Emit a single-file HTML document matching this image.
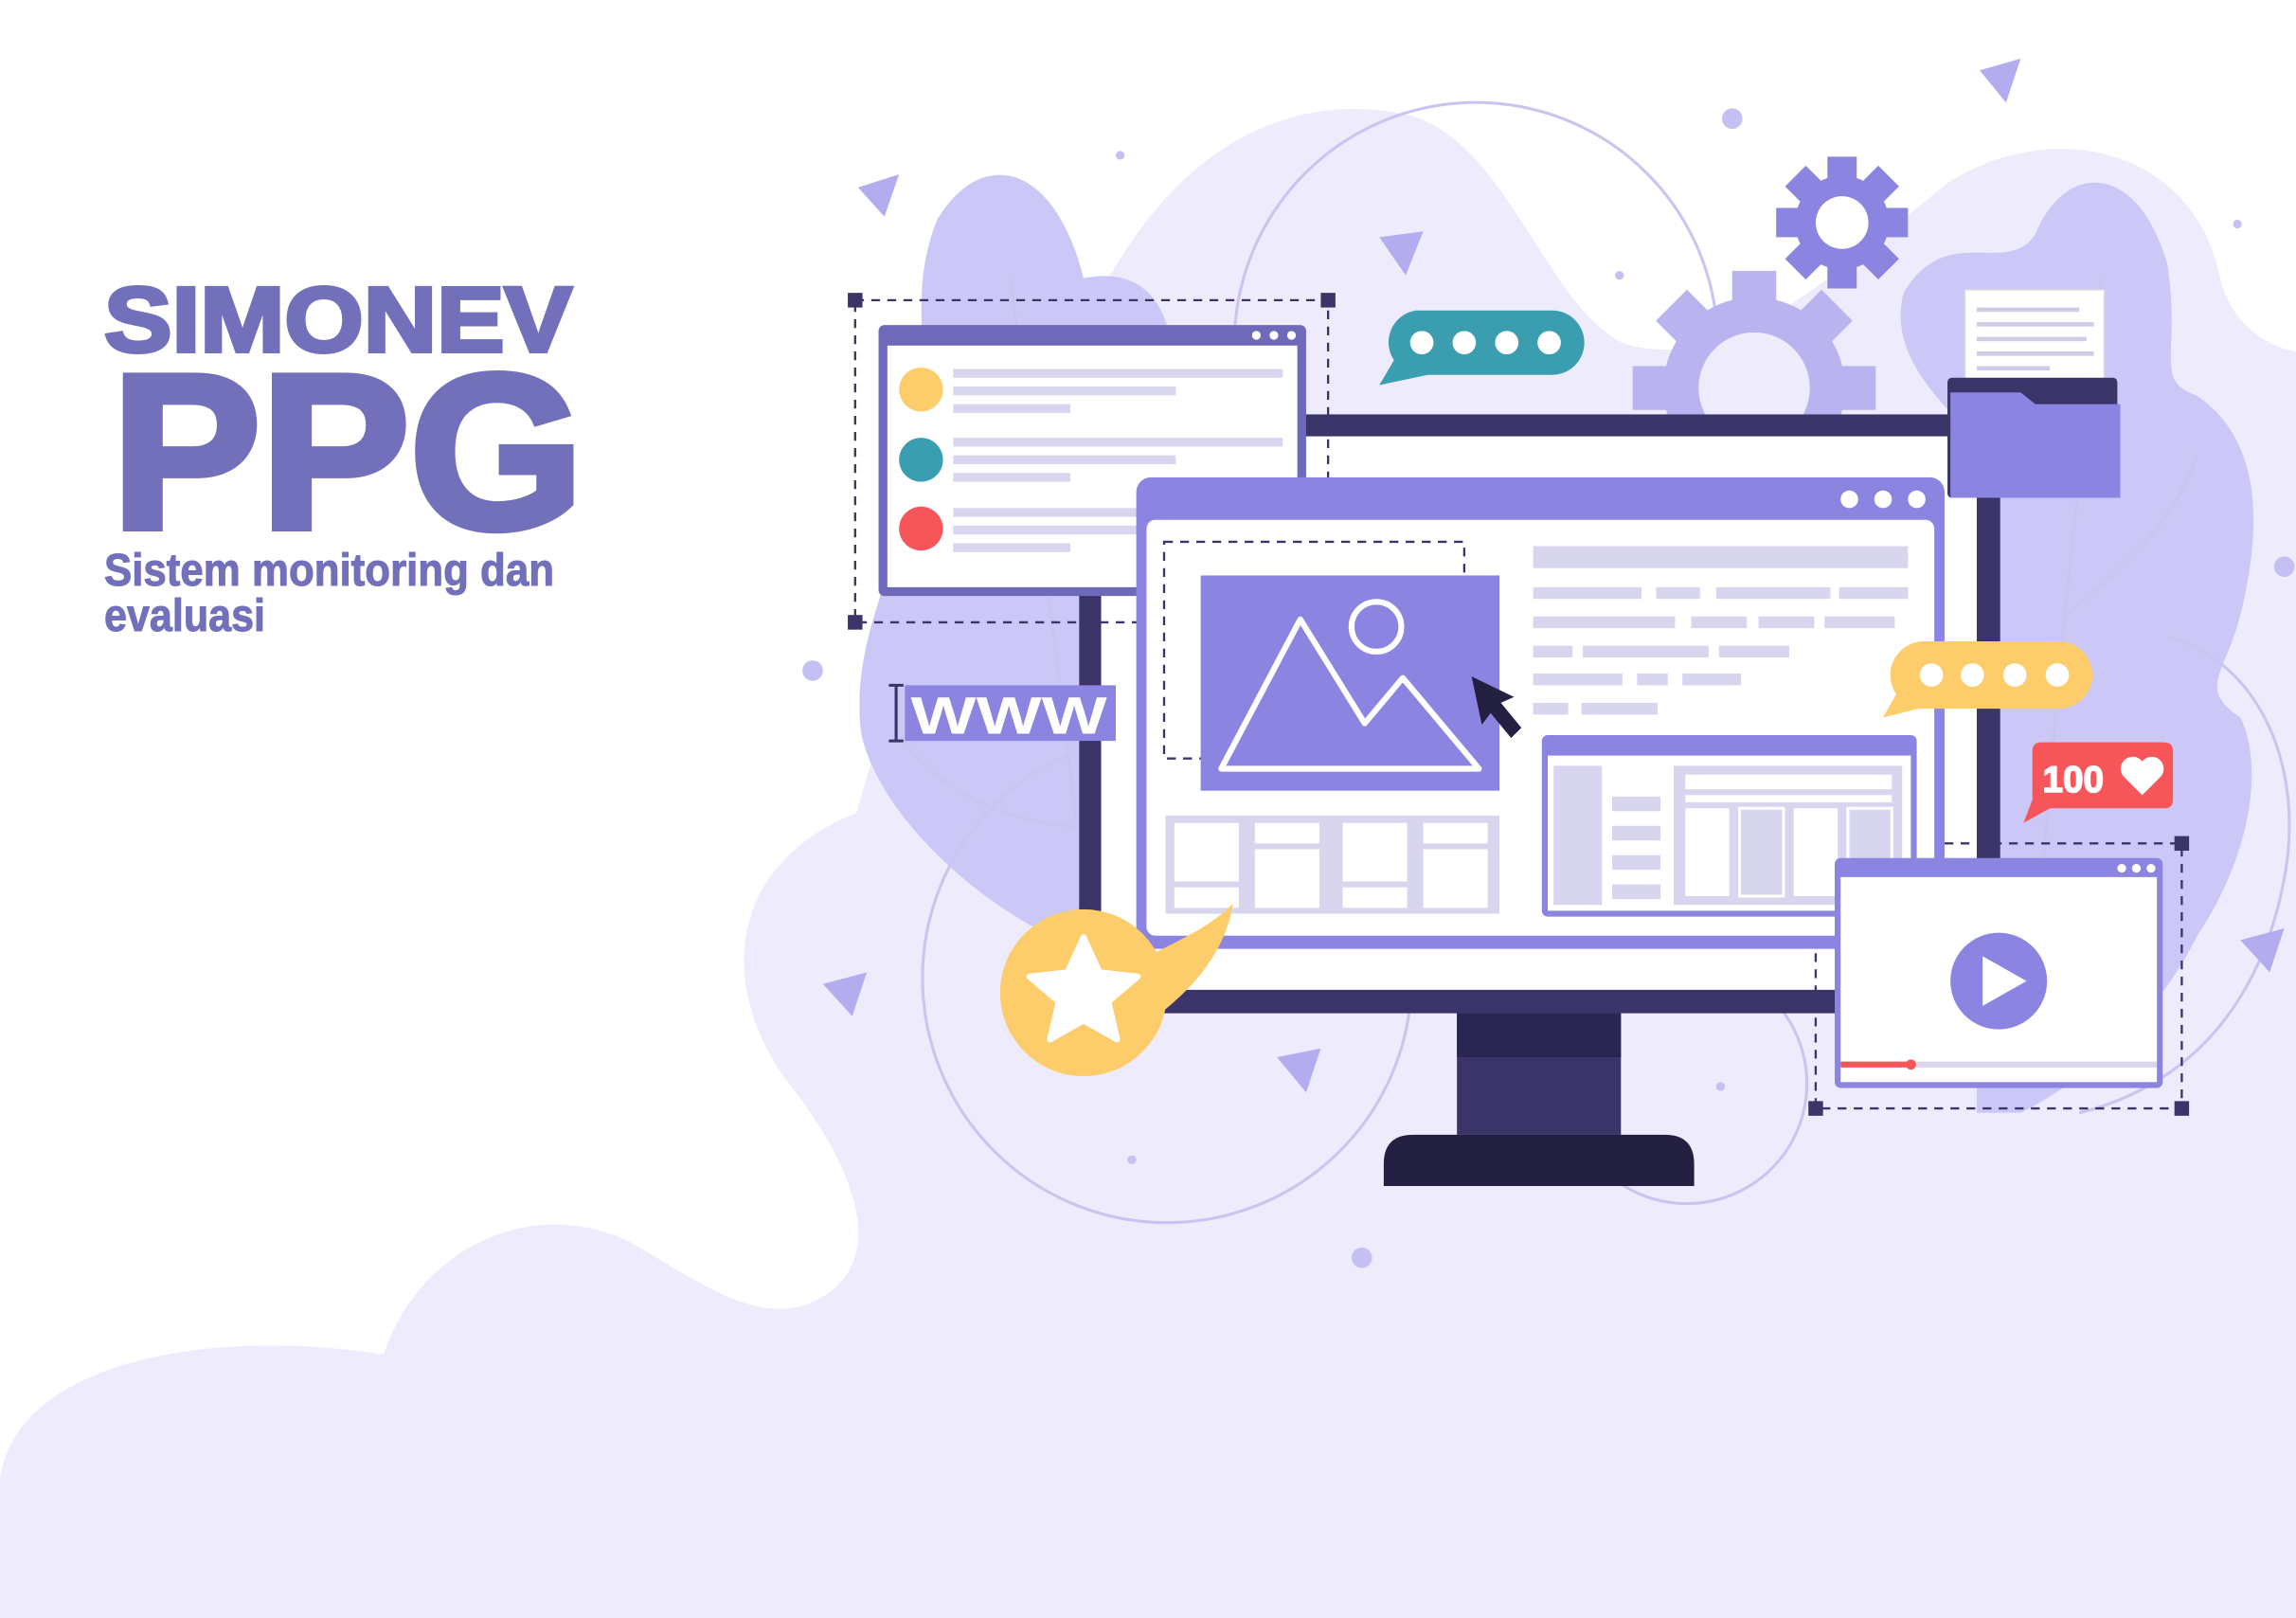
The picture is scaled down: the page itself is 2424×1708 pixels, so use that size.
<!DOCTYPE html>
<html><head><meta charset="utf-8"><style>
html,body{margin:0;padding:0;background:#fff;}
svg{display:block;}
</style></head><body>
<svg width="2424" height="1708" viewBox="0 0 2424 1708" xmlns="http://www.w3.org/2000/svg">
<rect width="2424" height="1708" fill="#fff"/>
<g transform="scale(1.5459 1.5457)">
<path fill="#eeecfc" d="M0,1105 L0,1010 C10,935 130,905 262,925 C285,855 360,815 430,848 C485,880 530,915 572,878 C605,845 575,785 535,735 C490,670 498,590 585,555 C615,450 650,320 760,185 C810,100 880,62 960,78 C1030,95 1055,210 1110,235 C1180,255 1250,190 1330,125 C1400,80 1495,100 1515,185 C1525,235 1568,240 1568,240 L1568,1105 Z"/>
<path fill="#cbc7f7" d="M640,150 C670,100 720,110 740,190 C790,180 810,220 800,300 C790,330 760,340 745,420 L745,650 C680,630 600,560 588,500 C580,430 620,380 630,300 C635,240 620,200 640,150 Z"/>
<path fill="#cbc7f7" d="M1300,200 C1330,150 1370,190 1390,160 C1410,110 1460,110 1480,180 C1490,240 1470,260 1500,270 C1545,300 1545,360 1530,420 C1520,460 1500,470 1530,490 C1545,520 1540,580 1500,640 C1470,700 1420,740 1380,760 L1350,760 L1350,300 C1320,270 1290,240 1300,200 Z"/>
<g fill="none" stroke="#cac5f0" stroke-width="2">
<circle cx="1008" cy="235" r="165"/>
<circle cx="797" cy="668" r="167"/>
<circle cx="1152" cy="740" r="82"/>
<path d="M1480,435 C1540,450 1575,520 1560,600 C1545,680 1500,740 1420,760"/>
<path d="M620,510 C650,545 690,562 740,565"/>
<path d="M690,190 L735,560"/>
<path d="M1435,190 L1410,420 L1395,590"/>
<path d="M1410,420 C1450,390 1490,350 1500,310"/>
</g>
<g fill="#b9b3f0">
<circle cx="1198" cy="265" r="62"/>
<rect x="1183" y="185" width="30" height="160"/>
<rect x="1115" y="250" width="166" height="30"/>
<rect x="1183" y="185" width="30" height="160" transform="rotate(45 1198 265)"/>
<rect x="1183" y="185" width="30" height="160" transform="rotate(-45 1198 265)"/>
</g>
<circle cx="1198" cy="265" r="38" fill="#eeecfc"/>
<g fill="#8b84e0">
<circle cx="1258" cy="152" r="32"/>
<rect x="1248" y="107" width="20" height="90"/>
<rect x="1213" y="142" width="90" height="20"/>
<rect x="1248" y="107" width="20" height="90" transform="rotate(45 1258 152)"/>
<rect x="1248" y="107" width="20" height="90" transform="rotate(-45 1258 152)"/>
</g>
<circle cx="1258" cy="152" r="18" fill="#fff"/>
<rect x="737" y="283" width="629" height="409" fill="#3a3468"/>
<rect x="752" y="298" width="598" height="378" fill="#fff"/>
<rect x="995" y="692" width="112" height="83" fill="#3a3468"/>
<rect x="995" y="692" width="112" height="30" fill="#2a2552"/>
<path d="M945,795 Q945,775 965,775 L1137,775 Q1157,775 1157,795 L1157,810 L945,810 Z" fill="#232042"/>
<rect x="1342" y="198" width="95" height="80" fill="#fff" stroke="#ddd" stroke-width="1"/>
<g fill="#cfcce8"><rect x="1350" y="210" width="70" height="3"/><rect x="1350" y="220" width="80" height="3"/><rect x="1350" y="230" width="75" height="3"/><rect x="1350" y="240" width="80" height="3"/><rect x="1350" y="250" width="50" height="3"/></g>
<rect x="1330" y="258" width="116" height="82" rx="3" fill="#3a3468"/>
<path d="M1332,268 L1380,268 L1390,276 L1448,276 L1448,340 L1332,340 Z" fill="#8b84e0"/>
<rect x="600" y="222" width="292" height="185" rx="4" fill="#6e69b8"/>
<rect x="606" y="236" width="280" height="165" fill="#fff"/>
<g fill="#fff"><circle cx="858" cy="229" r="3"/><circle cx="870" cy="229" r="3"/><circle cx="882" cy="229" r="3"/></g>
<circle cx="629" cy="266" r="15" fill="#fccd6a"/>
<circle cx="629" cy="314" r="15" fill="#3a9eb0"/>
<circle cx="629" cy="361" r="15" fill="#f6565a"/>
<g fill="#d8d5ef">
<rect x="651" y="252" width="225" height="6"/><rect x="651" y="264" width="152" height="6"/><rect x="651" y="276" width="80" height="6"/>
<rect x="651" y="299" width="225" height="6"/><rect x="651" y="311" width="152" height="6"/><rect x="651" y="323" width="80" height="6"/>
<rect x="651" y="347" width="225" height="6"/><rect x="651" y="359" width="152" height="6"/><rect x="651" y="371" width="80" height="6"/>
</g>
<g fill="none" stroke="#3a3468" stroke-width="1.5" stroke-dasharray="6 5">
<rect x="584" y="205" width="323" height="220"/>
<rect x="1240" y="576" width="250" height="181"/>
</g>
<g fill="#3a3468"><rect x="579" y="200" width="10" height="10"/><rect x="902" y="200" width="10" height="10"/><rect x="579" y="420" width="10" height="10"/>
<rect x="1235" y="752" width="10" height="10"/><rect x="1485" y="752" width="10" height="10"/><rect x="1485" y="571" width="10" height="10"/></g>
<rect x="776" y="326" width="552" height="322" rx="10" fill="#8b84e0"/>
<rect x="783" y="355" width="538" height="284" rx="6" fill="#fff"/>
<g fill="#fff"><circle cx="1263" cy="341" r="6"/><circle cx="1286" cy="341" r="6"/><circle cx="1309" cy="341" r="6"/></g>
<rect x="795" y="370" width="205" height="148" fill="none" stroke="#3a3468" stroke-width="1.5" stroke-dasharray="6 5"/>
<rect x="820" y="393" width="204" height="147" fill="#8b84e0"/>
<path d="M834,525 L888,423 L932,494 L958,463 L1010,525 Z" fill="none" stroke="#fff" stroke-width="4" stroke-linejoin="round"/>
<circle cx="940" cy="428" r="17" fill="none" stroke="#fff" stroke-width="4"/>
<path d="M1005,462 L1012,495 L1018,487 L1032,504 L1039,497 L1025,480 L1034,476 Z" fill="#232042"/>
<g fill="#d8d5ef">
<rect x="1047" y="373" width="256" height="15"/>
<rect x="1047" y="401" width="74" height="8"/><rect x="1131" y="401" width="30" height="8"/><rect x="1172" y="401" width="78" height="8"/><rect x="1256" y="401" width="47" height="8"/>
<rect x="1047" y="421" width="97" height="8"/><rect x="1155" y="421" width="38" height="8"/><rect x="1201" y="421" width="38" height="8"/><rect x="1246" y="421" width="48" height="8"/>
<rect x="1047" y="441" width="27" height="8"/><rect x="1081" y="441" width="86" height="8"/><rect x="1174" y="441" width="48" height="8"/>
<rect x="1047" y="460" width="61" height="8"/><rect x="1118" y="460" width="21" height="8"/><rect x="1149" y="460" width="40" height="8"/>
<rect x="1047" y="480" width="24" height="8"/><rect x="1080" y="480" width="52" height="8"/>
<rect x="796" y="557" width="228" height="67"/>
</g>
<g fill="#fff">
<rect x="802" y="562" width="44" height="40"/><rect x="802" y="606" width="44" height="14"/>
<rect x="857" y="562" width="44" height="14"/><rect x="857" y="580" width="44" height="40"/>
<rect x="917" y="562" width="44" height="40"/><rect x="917" y="606" width="44" height="14"/>
<rect x="972" y="562" width="44" height="14"/><rect x="972" y="580" width="44" height="40"/>
</g>
<rect x="1053" y="502" width="256" height="124" rx="4" fill="#8b84e0"/>
<rect x="1057" y="516" width="248" height="106" fill="#fff"/>
<g fill="#d8d5ef"><rect x="1061" y="523" width="33" height="95"/>
<rect x="1101" y="544" width="33" height="10"/><rect x="1101" y="564" width="33" height="10"/><rect x="1101" y="584" width="33" height="10"/><rect x="1101" y="604" width="33" height="10"/>
<rect x="1143" y="523" width="156" height="95"/></g>
<g fill="#fff"><rect x="1151" y="529" width="141" height="10"/><rect x="1151" y="543" width="141" height="5"/>
<rect x="1151" y="552" width="30" height="60"/><rect x="1188" y="552" width="30" height="60" fill="none" stroke="#fff" stroke-width="2"/><rect x="1225" y="552" width="30" height="60"/><rect x="1262" y="552" width="30" height="60" fill="none" stroke="#fff" stroke-width="2"/></g>
<rect x="1253" y="586" width="224" height="157" rx="4" fill="#8b84e0"/>
<rect x="1257" y="599" width="216" height="140" fill="#fff"/>
<g fill="#fff"><circle cx="1449" cy="593" r="3"/><circle cx="1459" cy="593" r="3"/><circle cx="1469" cy="593" r="3"/></g>
<circle cx="1365" cy="670" r="33" fill="#8b84e0"/>
<path d="M1354,653 L1384,670 L1354,687 Z" fill="#fff"/>
<rect x="1257" y="725" width="216" height="4" fill="#d8d5ef"/>
<rect x="1257" y="725" width="48" height="4" fill="#f6565a"/><circle cx="1305" cy="727" r="3.5" fill="#f6565a"/>
<path d="M967,212 L1060,212 A22,22 0 0 1 1060,256 L975,256 L942,263 L952,246 A22,22 0 0 1 967,212 Z" fill="#3a9eb0"/>
<g fill="#fff"><circle cx="971" cy="234" r="8"/><circle cx="1000" cy="234" r="8"/><circle cx="1029" cy="234" r="8"/><circle cx="1058" cy="234" r="8"/></g>
<path d="M1315,438 L1406,438 A23,23 0 0 1 1406,484 L1310,484 L1286,490 L1295,474 A23,23 0 0 1 1315,438 Z" fill="#fccd6a"/>
<g fill="#fff"><circle cx="1319" cy="461" r="8"/><circle cx="1347" cy="461" r="8"/><circle cx="1376" cy="461" r="8"/><circle cx="1405" cy="461" r="8"/></g>
<path d="M1394,507 L1478,507 Q1484,507 1484,513 L1484,546 Q1484,552 1478,552 L1400,552 L1382,562 L1388,546 L1388,513 Q1388,507 1394,507 Z" fill="#f6565a"/>
<text x="1395" y="541" font-family="Liberation Sans, sans-serif" font-weight="bold" font-size="25" fill="#fff" stroke="#fff" stroke-width="1">100</text>
<path d="M1463,543 L1450,530 A7,7 0 0 1 1463,520 A7,7 0 0 1 1476,530 Z" fill="#fff"/>
<path d="M790,650 C810,640 830,630 842,617 C838,645 820,670 795,690 Z" fill="#fccd6a"/>
<circle cx="740" cy="678" r="57" fill="#fccd6a"/>
<path d="M740,640 L751,664 L777,667 L757,684 L763,710 L740,697 L717,710 L723,684 L703,667 L729,664 Z" fill="#fff" stroke="#fff" stroke-width="4" stroke-linejoin="round"/>
<rect x="618" y="468" width="144" height="38" fill="#8b84e0"/>
<text x="622" y="501" font-family="Liberation Sans, sans-serif" font-weight="bold" font-size="36" fill="#fff" textLength="134" lengthAdjust="spacingAndGlyphs">WWW</text>
<path d="M607,468 L617,468 M612,468 L612,506 M607,506 L617,506" stroke="#3a3468" stroke-width="2"/>
<g fill="#b3adf0">
<path d="M586,128 L614,119 L604,148 Z"/><path d="M942,162 L972,158 L960,188 Z"/><path d="M1352,48 L1380,40 L1370,70 Z"/>
<path d="M562,672 L592,664 L582,694 Z"/><path d="M872,722 L902,716 L892,746 Z"/><path d="M1530,642 L1560,634 L1550,664 Z"/>
</g>
<g fill="#c5c0f3">
<circle cx="1183" cy="81" r="7"/><circle cx="555" cy="458" r="7"/><circle cx="930" cy="859" r="7"/><circle cx="1560" cy="387" r="7"/>
<circle cx="765" cy="106" r="3"/><circle cx="1106" cy="188" r="3"/><circle cx="1528" cy="153" r="3"/><circle cx="1175" cy="742" r="3"/><circle cx="773" cy="792" r="3"/>
</g>
</g>
<g font-family="Liberation Sans, Arial, sans-serif" font-weight="bold" fill="#7370bb" stroke="#7370bb">
<text x="110" y="371" font-size="97" stroke-width="4" textLength="494" lengthAdjust="spacingAndGlyphs">SIMONEV</text>
<text x="118" y="557" font-size="232" stroke-width="8" textLength="498" lengthAdjust="spacingAndGlyphs">PPG</text>
<text x="110" y="618" font-size="48" stroke-width="1" textLength="475" lengthAdjust="spacingAndGlyphs">Sistem monitoring dan</text>
<text x="110" y="666" font-size="48" stroke-width="1" textLength="170" lengthAdjust="spacingAndGlyphs">evaluasi</text>
</g>
</svg>
</body></html>
